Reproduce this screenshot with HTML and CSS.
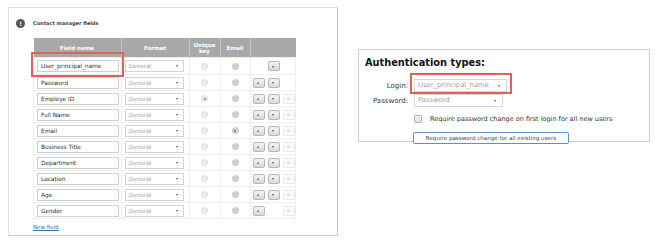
FILE: index.html
```html
<!DOCTYPE html>
<html lang="en">
<head>
    <meta charset="UTF-8">
    <title>Contact manager fields</title>
    <link rel="stylesheet" href="styles.css">
</head>
<body>
    <!-- Contact manager fields -->
    <div class="fields-panel">
        <div class="panel-head">
            <span class="info-icon">!</span>
            <span class="panel-title">Contact manager fields</span>
        </div>

        <table class="fields-table">
            <thead>
                <tr>
                    <th class="col-name">Field name</th>
                    <th class="col-format">Format</th>
                    <th class="col-unique">Unique key</th>
                    <th class="col-email">Email</th>
                    <th class="col-actions"></th>
                </tr>
            </thead>
            <tbody>
                <tr class="first-row">
                    <td class="name-cell highlighted"><div class="text-input">User_principal_name</div><span class="highlight"></span></td>
                    <td><div class="select">General<span class="caret"></span></div></td>
                    <td><span class="radio"></span></td>
                    <td><span class="radio dark"></span></td>
                    <td><div class="actions"><span class="btn-slot"></span><span class="move-btn down"></span><span class="btn-slot"></span></div></td>
                </tr>
                <tr>
                    <td class="name-cell"><div class="text-input">Password</div></td>
                    <td><div class="select">General<span class="caret"></span></div></td>
                    <td><span class="radio"></span></td>
                    <td><span class="radio dark"></span></td>
                    <td><div class="actions"><span class="move-btn up"></span><span class="move-btn down"></span><span class="btn-slot"></span></div></td>
                </tr>
                <tr>
                    <td class="name-cell"><div class="text-input">Employe ID</div></td>
                    <td><div class="select">General<span class="caret"></span></div></td>
                    <td><span class="radio checked"></span></td>
                    <td><span class="radio dark"></span></td>
                    <td><div class="actions"><span class="move-btn up"></span><span class="move-btn down"></span><span class="remove-btn">×</span></div></td>
                </tr>
                <tr>
                    <td class="name-cell"><div class="text-input">Full Name</div></td>
                    <td><div class="select">General<span class="caret"></span></div></td>
                    <td><span class="radio"></span></td>
                    <td><span class="radio dark"></span></td>
                    <td><div class="actions"><span class="move-btn up"></span><span class="move-btn down"></span><span class="remove-btn">×</span></div></td>
                </tr>
                <tr>
                    <td class="name-cell"><div class="text-input">Email</div></td>
                    <td><div class="select">General<span class="caret"></span></div></td>
                    <td><span class="radio"></span></td>
                    <td><span class="radio dark checked"></span></td>
                    <td><div class="actions"><span class="move-btn up"></span><span class="move-btn down"></span><span class="remove-btn">×</span></div></td>
                </tr>
                <tr>
                    <td class="name-cell"><div class="text-input">Business Title</div></td>
                    <td><div class="select">General<span class="caret"></span></div></td>
                    <td><span class="radio"></span></td>
                    <td><span class="radio dark"></span></td>
                    <td><div class="actions"><span class="move-btn up"></span><span class="move-btn down"></span><span class="remove-btn">×</span></div></td>
                </tr>
                <tr>
                    <td class="name-cell"><div class="text-input">Department</div></td>
                    <td><div class="select">General<span class="caret"></span></div></td>
                    <td><span class="radio"></span></td>
                    <td><span class="radio dark"></span></td>
                    <td><div class="actions"><span class="move-btn up"></span><span class="move-btn down"></span><span class="remove-btn">×</span></div></td>
                </tr>
                <tr>
                    <td class="name-cell"><div class="text-input">Location</div></td>
                    <td><div class="select">General<span class="caret"></span></div></td>
                    <td><span class="radio"></span></td>
                    <td><span class="radio dark"></span></td>
                    <td><div class="actions"><span class="move-btn up"></span><span class="move-btn down"></span><span class="remove-btn">×</span></div></td>
                </tr>
                <tr>
                    <td class="name-cell"><div class="text-input">Age</div></td>
                    <td><div class="select">General<span class="caret"></span></div></td>
                    <td><span class="radio"></span></td>
                    <td><span class="radio dark"></span></td>
                    <td><div class="actions"><span class="move-btn up"></span><span class="move-btn down"></span><span class="remove-btn">×</span></div></td>
                </tr>
                <tr>
                    <td class="name-cell"><div class="text-input">Gender</div></td>
                    <td><div class="select">General<span class="caret"></span></div></td>
                    <td><span class="radio"></span></td>
                    <td><span class="radio dark"></span></td>
                    <td><div class="actions"><span class="move-btn up"></span><span class="btn-slot"></span><span class="remove-btn">×</span></div></td>
                </tr>
            </tbody>
        </table>

        <a class="new-field" href="#">New field</a>
    </div>

    <!-- Authentication types -->
    <div class="auth-panel">
        <div class="auth-title">Authentication types:</div>
        <div class="auth-form">
            <label class="auth-label">Login:</label>
            <div class="auth-control">
                <div class="auth-select">User_principal_name<span class="caret"></span></div>
                <span class="highlight"></span>
            </div>

            <label class="auth-label">Password:</label>
            <div class="auth-control">
                <div class="auth-select short">Password<span class="caret"></span></div>
            </div>

            <span></span>
            <div class="check-row">
                <span class="checkbox"></span>
                <span>Require password change on first login for all new users</span>
            </div>

            <span></span>
            <div>
                <button class="auth-button">Require password change for all existing users</button>
            </div>
        </div>
    </div>
</body>
</html>
```

FILE: styles.css
```css
/* General Reset */
body {
    margin: 0;
    font-family: "DejaVu Sans", Verdana, sans-serif;
    color: #333;
    background: #fff;
    display: flex;
    align-items: flex-start;
}

/* Left Panel */
.fields-panel {
    box-sizing: border-box;
    margin: 7px 0 0 8px;
    width: 330px;
    height: 229px;
    padding: 10px 0 0 7px;
    border: 1px solid #c9c9c9;
    border-top-color: #dedede;
    border-left-color: #dedede;
}

.panel-head {
    display: flex;
    align-items: center;
    gap: 8px;
    height: 10px;
}

.info-icon {
    width: 9px;
    height: 9px;
    border-radius: 50%;
    background: #555;
    color: #fff;
    font-size: 6px;
    font-weight: bold;
    line-height: 9px;
    text-align: center;
}

.panel-title {
    font-size: 5px;
    font-weight: bold;
    color: #444;
}

/* Table */
.fields-table {
    margin: 10px 0 0 17px;
    width: 263px;
    border-collapse: collapse;
    table-layout: fixed;
    font-size: 5.8px;
    line-height: 6px;
}

.fields-table th {
    background: #a8a8a8;
    color: #fff;
    font-size: 5.5px;
    font-weight: bold;
    line-height: 6px;
    height: 19px;
    padding: 0;
    border-left: 1px solid #c4c4c4;
}

.fields-table th:first-child {
    border-left: none;
}

/* widths leave room for the collapsed 1px borders */
.col-name { width: 87px; }
.col-format { width: 67px; }
.col-unique { width: 30px; }
.col-email { width: 29px; }

.fields-table td {
    height: 15px;
    padding: 0;
    border: 1px solid #eeeeee;
    text-align: center;
    vertical-align: middle;
}

.fields-table .first-row td {
    height: 16px;
}

.name-cell {
    position: relative;
}

.text-input {
    box-sizing: border-box;
    margin: 0 2px 0 3px;
    height: 12px;
    padding-left: 3px;
    border: 1px solid #cfcfcf;
    line-height: 10px;
    color: #2e2e2e;
    text-align: left;
}

.highlight {
    position: absolute;
    left: -3px;
    right: -3px;
    top: -6px;
    bottom: -3px;
    border: 2px solid #e2605a;
}

.select {
    box-sizing: border-box;
    position: relative;
    margin-left: 3px;
    width: 59px;
    height: 12px;
    padding-left: 3px;
    border: 1px solid #d4d4d4;
    line-height: 10px;
    color: #a3a3a3;
    text-align: left;
}

.caret {
    position: absolute;
    right: 5px;
    top: 4px;
    border-left: 1.5px solid transparent;
    border-right: 1.5px solid transparent;
    border-top: 2.5px solid #555;
}

/* Radios */
.radio {
    display: block;
    margin: 0 auto;
    width: 5px;
    height: 5px;
    border-radius: 50%;
    background: #ececec;
    border: 0.5px solid #dcdcdc;
    position: relative;
}

.radio.dark {
    background: #d2d2d2;
    border-color: #c2c2c2;
}

.radio.checked::after {
    content: "";
    position: absolute;
    left: 1.5px;
    top: 1.5px;
    width: 2px;
    height: 2px;
    border-radius: 50%;
    background: #777;
}

/* Action buttons */
.actions {
    display: flex;
    gap: 3px;
    padding-left: 2px;
}

.move-btn,
.remove-btn,
.btn-slot {
    box-sizing: border-box;
    width: 12px;
    height: 10px;
}

.move-btn {
    position: relative;
    border: 1px solid #b8b8b8;
    border-radius: 2px;
    background: linear-gradient(#f2f2f2, #d9d9d9);
}

.move-btn::after {
    content: "";
    position: absolute;
    left: 3.5px;
    border-left: 1.5px solid transparent;
    border-right: 1.5px solid transparent;
}

.move-btn.up::after {
    top: 3px;
    border-bottom: 2px solid #555;
}

.move-btn.down::after {
    top: 3.5px;
    border-top: 2px solid #555;
}

.remove-btn {
    border: 1px solid #e4e4e4;
    border-radius: 2px;
    color: #cfcfcf;
    font-size: 7px;
    line-height: 8px;
    text-align: center;
}

.new-field {
    display: block;
    margin: 4px 0 0 17px;
    width: max-content;
    font-size: 5.5px;
    line-height: 9px;
    color: #3b6db0;
}

/* Right Panel */
.auth-panel {
    box-sizing: border-box;
    margin: 49px 0 0 20px;
    width: 292px;
    height: 93px;
    padding: 5px 0 0 6px;
    border: 1px solid #cfcfcf;
}

.auth-title {
    font-size: 9.8px;
    font-weight: bold;
    line-height: 16px;
    color: #111;
    margin-bottom: 8px;
}

.auth-form {
    display: grid;
    grid-template-columns: 43px auto;
    column-gap: 6px;
    row-gap: 2px;
    align-items: center;
}

.auth-label {
    text-align: right;
    font-size: 7px;
    color: #333;
}

.auth-control {
    position: relative;
    width: max-content;
}

.auth-select {
    box-sizing: border-box;
    position: relative;
    width: 93px;
    height: 13px;
    padding-left: 3px;
    border: 1px solid #d4d4d4;
    font-size: 6.8px;
    line-height: 11px;
    color: #a0a0a0;
}

.auth-select.short {
    width: 89px;
}

.auth-select .caret {
    right: 6px;
    top: 4.5px;
}

.auth-control .highlight {
    left: -4px;
    right: -5px;
    top: -6px;
    bottom: -2px;
}

.check-row {
    display: flex;
    align-items: center;
    gap: 8px;
    margin-top: 6px;
    font-size: 6.5px;
    color: #333;
}

.checkbox {
    box-sizing: border-box;
    width: 8px;
    height: 8px;
    border: 1px solid #b5b5b5;
    border-radius: 1px;
    background: linear-gradient(#f4f4f4, #dedede);
}

.auth-button {
    box-sizing: border-box;
    margin: 2px 0 0 -1px;
    width: 156px;
    height: 12px;
    padding: 0;
    border: 1px solid #5a8fd2;
    border-radius: 2px;
    background: #fff;
    font-family: "DejaVu Sans", Verdana, sans-serif;
    font-size: 5.6px;
    color: #2c4a6e;
}
```
